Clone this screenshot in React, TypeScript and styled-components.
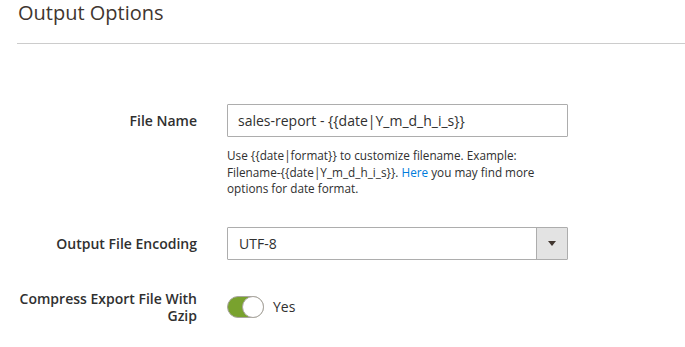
import React from 'react'
import styled, { createGlobalStyle } from 'styled-components'

const GlobalStyle = createGlobalStyle`
  html, body {
    margin: 0;
    padding: 0;
    background: #ffffff;
  }
  body {
    font-family: 'Open Sans', 'Liberation Sans', Arial, sans-serif;
    color: #303030;
  }
`

const Page = styled.div`
  padding-left: 17px;
  width: 668px;
`

const Legend = styled.h2`
  margin: 0;
  padding: 0 0 17px 1px;
  font-size: 20px;
  line-height: 26px;
  font-weight: 400;
  color: #41362f;
  border-bottom: 1px solid #cccccc;
`

const Fieldset = styled.div`
  margin-top: 60px;
  display: flex;
  flex-direction: column;
  gap: 30px;
`

const Field = styled.div`
  display: grid;
  grid-template-columns: 180px 341px;
  column-gap: 30px;
  align-items: start;
`

const Label = styled.label<{ $top?: number }>`
  text-align: right;
  font-size: 14px;
  line-height: 17px;
  font-weight: 600;
  color: #303030;
  padding-top: ${({ $top }) => ($top ?? 8)}px;
`

const TextInput = styled.input`
  box-sizing: border-box;
  width: 100%;
  height: 33px;
  margin: 0;
  padding: 0 10px;
  border: 1px solid #adadad;
  border-radius: 1px;
  font-family: inherit;
  font-size: 14px;
  color: #303030;
  background: #ffffff;
  outline: none;
`

const Note = styled.div`
  margin-top: 10px;
  font-size: 11.75px;
  line-height: 16.5px;
  color: #303030;
`

const Link = styled.a`
  color: #007bdb;
  text-decoration: none;
`

const SelectBox = styled.div`
  box-sizing: border-box;
  height: 33px;
  display: flex;
  border: 1px solid #adadad;
  border-radius: 1px;
  background: #ffffff;
`

const SelectValue = styled.div`
  flex: 1;
  padding-left: 11px;
  font-size: 14px;
  line-height: 31px;
  color: #303030;
`

const ArrowBox = styled.div`
  width: 30px;
  display: flex;
  align-items: center;
  justify-content: center;
  background: #e3e3e3;
  border-left: 1px solid #adadad;
`

const Arrow = styled.span`
  width: 0;
  height: 0;
  border-left: 4px solid transparent;
  border-right: 4px solid transparent;
  border-top: 5px solid #41362f;
  margin-top: 1px;
`

const SwitchRow = styled.div`
  display: flex;
  align-items: center;
  gap: 9px;
  margin-top: 6px;
`

const Track = styled.span<{ $on: boolean }>`
  position: relative;
  box-sizing: border-box;
  width: 37px;
  height: 22px;
  border-radius: 12px;
  border: 1px solid #aaa6a0;
  background: ${({ $on }) => ($on ? '#79a22e' : '#e3e3e3')};
`

const Knob = styled.span<{ $on: boolean }>`
  position: absolute;
  top: -1px;
  ${({ $on }) => ($on ? 'right: -1px;' : 'left: -1px;')}
  box-sizing: border-box;
  width: 22px;
  height: 22px;
  border-radius: 50%;
  border: 1px solid #aaa6a0;
  background: #ffffff;
`

const SwitchText = styled.span`
  font-size: 14px;
  line-height: 17px;
  color: #303030;
`

export default function App() {
  return (
    <Page>
      <GlobalStyle />
      <Legend>Output Options</Legend>
      <Fieldset>
        <Field>
          <Label>File Name</Label>
          <div>
            <TextInput readOnly value="sales-report - {{date|Y_m_d_h_i_s}}" />
            <Note>
              Use {'{{date|format}}'} to customize filename. Example:
              <br />
              Filename-{'{{date|Y_m_d_h_i_s}}'}. <Link href="#">Here</Link> you may find more
              <br />
              options for date format.
            </Note>
          </div>
        </Field>
        <Field>
          <Label>Output File Encoding</Label>
          <SelectBox>
            <SelectValue>UTF-8</SelectValue>
            <ArrowBox>
              <Arrow />
            </ArrowBox>
          </SelectBox>
        </Field>
        <Field>
          <Label $top={0}>Compress Export File With Gzip</Label>
          <SwitchRow>
            <Track $on>
              <Knob $on />
            </Track>
            <SwitchText>Yes</SwitchText>
          </SwitchRow>
        </Field>
      </Fieldset>
    </Page>
  )
}
